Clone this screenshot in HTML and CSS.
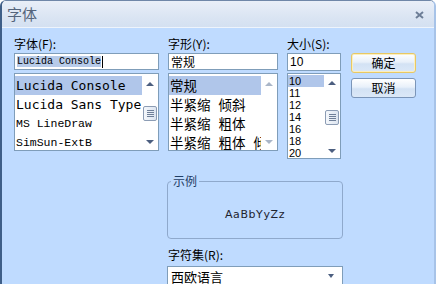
FILE: index.html
```html
<!DOCTYPE html>
<html>
<head>
<meta charset="utf-8">
<link rel="stylesheet" href="styles.css">
</head>
<body>
<div class="window">
  <div class="titlebar">
    <span class="title">字体</span>
    <svg class="close" width="9" height="8" viewBox="0 0 9 8"><path d="M1 1 L8 7 M8 1 L1 7" stroke="#6d7e97" stroke-width="2"/></svg>
  </div>
  <div class="content">
    <div class="lbl c1">字体(F):</div>
    <div class="lbl c2">字形(Y):</div>
    <div class="lbl c3">大小(S):</div>

    <div class="input c1 in-font"><span class="sel">Lucida Console</span><span class="caret"></span></div>
    <div class="input c2 in-style">常规</div>
    <div class="input c3 in-size">10</div>

    <div class="buttons c4">
      <div class="btn default">确定</div>
      <div class="btn">取消</div>
    </div>

    <div class="list c1 list-font">
      <div class="items">
        <div class="item hl big">Lucida Console</div>
        <div class="item big">Lucida Sans Type</div>
        <div class="item small">MS LineDraw</div>
        <div class="item small">SimSun-ExtB</div>
      </div>
      <div class="sb">
        <span class="arrow up"></span>
        <span class="thumb"><i></i><i></i><i></i><i></i></span>
        <span class="arrow down"></span>
      </div>
    </div>

    <div class="list c2 list-style">
      <div class="items">
        <div class="item hl cjk">常规</div>
        <div class="item cjk">半紧缩 倾斜</div>
        <div class="item cjk">半紧缩 粗体</div>
        <div class="item cjk">半紧缩 粗体 倾斜</div>
      </div>
      <div class="sb sb-dis">
        <span class="arrow up"></span>
        <span class="spacer"></span>
        <span class="arrow down"></span>
      </div>
    </div>

    <div class="list c3 list-size">
      <div class="items">
        <div class="item num hl">10</div>
        <div class="item num">11</div>
        <div class="item num">12</div>
        <div class="item num">14</div>
        <div class="item num">16</div>
        <div class="item num">18</div>
        <div class="item num">20</div>
      </div>
      <div class="sb">
        <span class="arrow up"></span>
        <span class="thumb"><i></i><i></i><i></i><i></i></span>
        <span class="arrow down"></span>
      </div>
    </div>

    <fieldset class="group c23">
      <legend>示例</legend>
      <div class="sample">AaBbYyZz</div>
    </fieldset>

    <div class="lbl c23 lbl-charset">字符集(R):</div>
    <div class="combo c23">
      <span>西欧语言</span>
      <span class="arrow down small-arrow"></span>
    </div>
  </div>
</div>
</body>
</html>
```

FILE: styles.css
```css
* { box-sizing: border-box; }
html, body { margin: 0; padding: 0; background: #ffffff; }
body { width: 437px; height: 295px; overflow: hidden; font-family: "Noto Sans CJK SC", "DejaVu Sans", sans-serif; }

.window {
  width: 436px;
  border-left: 2px solid #3f5f88;
  border-right: 2px solid #a7c3e8;
  border-top: 1px solid #6f87a8;
  border-radius: 6px 6px 0 0;
  overflow: hidden;
}

.titlebar {
  height: 27px;
  background: linear-gradient(#e9eff8, #dbe5f3 60%, #d4e0f1);
  border-bottom: 1px solid #eef4fc;
  display: flex;
  align-items: center;
  justify-content: space-between;
  padding: 0 10px 0 5px;
}
.title { font-size: 15px; line-height: 18px; color: #55657c; }
.close { margin-top: 1px; }

.content {
  height: 256px;
  background: #bfdbff;
  padding: 9px 0 0 12px;
  display: grid;
  grid-template-columns: 145px 110px 54px 66px;
  grid-template-rows: 16px 18px 88px 81px 26px 20px;
  column-gap: 9px;
  overflow: hidden;
}
.c1 { grid-column: 1; }
.c2 { grid-column: 2; }
.c3 { grid-column: 3; }
.c4 { grid-column: 4; }
.c23 { grid-column: 2 / 4; }

.lbl { font-size: 12px; line-height: 14px; color: #000; grid-row: 1; }

.input {
  grid-row: 2;
  height: 17px;
  background: #fff;
  border: 1px solid #7f9db9;
  padding: 0 2px;
  display: flex;
  align-items: center;
  color: #000;
  white-space: nowrap;
  overflow: hidden;
}
.in-font { font-family: "Liberation Mono", monospace; font-size: 10px; }
.in-font .sel { background: #b7cbe9; }
.caret { width: 1px; height: 12px; background: #000; margin-left: 1px; }
.in-style { font-size: 12px; }
.in-size { font-family: "Liberation Sans", sans-serif; font-size: 12px; height: 18px; }

.buttons { grid-row: 2 / 4; display: flex; flex-direction: column; gap: 5px; margin-left: 1px; }
.btn {
  height: 20px;
  border: 1px solid #7b95b8;
  border-radius: 3px;
  background: linear-gradient(#ffffff, #e8f0fa 45%, #d3e2f4 55%, #dbe8f8);
  font-size: 12px;
  line-height: 18px;
  text-align: center;
  color: #000;
}
.btn.default { border-color: #e8c864; box-shadow: inset 0 0 0 1px #fbefc0; }

.list {
  grid-row: 3;
  margin-top: 2px;
  height: 78px;
  background: #fff;
  border: 1px solid #7f9db9;
  display: flex;
  overflow: hidden;
}
.list-size { margin-top: 2px; height: 86px; }
.items { flex: 1; overflow: hidden; padding-top: 2px; }
.item { white-space: nowrap; color: #000; padding-left: 1px; overflow: hidden; }
.item.hl { background: #b0c6ea; }
.big { font-family: "DejaVu Sans Mono", monospace; font-size: 13px; height: 19px; line-height: 19px; }
.small { font-family: "Liberation Mono", monospace; font-size: 11.5px; height: 19px; line-height: 19px; }
.cjk { font-size: 13.5px; height: 19px; line-height: 19px; word-spacing: 5px; }
.list-size .items { padding-top: 1px; }
.num { font-family: "Liberation Sans", sans-serif; font-size: 11px; height: 12px; line-height: 12px; }

.sb {
  width: 16px;
  display: flex;
  flex-direction: column;
  align-items: center;
  padding: 8px 0 6px;
  justify-content: space-between;
}
.arrow { width: 0; height: 0; border-left: 4px solid transparent; border-right: 4px solid transparent; }
.arrow.up { border-bottom: 4px solid #4c5f80; }
.arrow.down { border-top: 4px solid #4c5f80; }
.sb-dis .arrow.up { border-bottom-color: #aab6c8; }
.sb-dis .arrow.down { border-top-color: #aab6c8; }
.thumb {
  width: 14px;
  height: 15px;
  border: 1px solid #8c9cb4;
  border-radius: 2px;
  background: linear-gradient(90deg, #f4f7fb, #dde5f0);
  display: flex;
  flex-direction: column;
  align-items: center;
  justify-content: center;
  gap: 1px;
}
.thumb i { display: block; width: 7px; height: 1px; background: #6f7f98; }
.list-size .sb { padding: 7px 0 5px; }

.group {
  grid-row: 4;
  margin: 16px 0 0 -1px;
  padding: 0;
  height: 64px;
  width: 176px;
  border: 1px solid #8fa9cc;
  border-radius: 4px;
  display: block;
  min-width: 0;
}
.group legend {
  font-size: 12px;
  line-height: 12px;
  color: #1f3e66;
  padding: 0 2px;
  margin-left: 3px;
}
.sample {
  font-family: "DejaVu Sans", sans-serif;
  font-size: 11px;
  line-height: 14px;
  color: #1e2430;
  letter-spacing: 0.6px;
  text-align: center;
  padding-top: 21px;
}

.lbl-charset { grid-row: 5; align-self: end; margin-bottom: 4px; }

.combo {
  grid-row: 6;
  height: 20px;
  margin-left: -1px;
  width: 176px;
  background: #fff;
  border: 1px solid #7f9db9;
  display: flex;
  align-items: center;
  justify-content: space-between;
  padding: 0 8px 0 3px;
  font-size: 13px;
  color: #000;
}
.small-arrow { border-left-width: 3px; border-right-width: 3px; border-top-width: 3px; border-top-color: #6e7f99; }
```
